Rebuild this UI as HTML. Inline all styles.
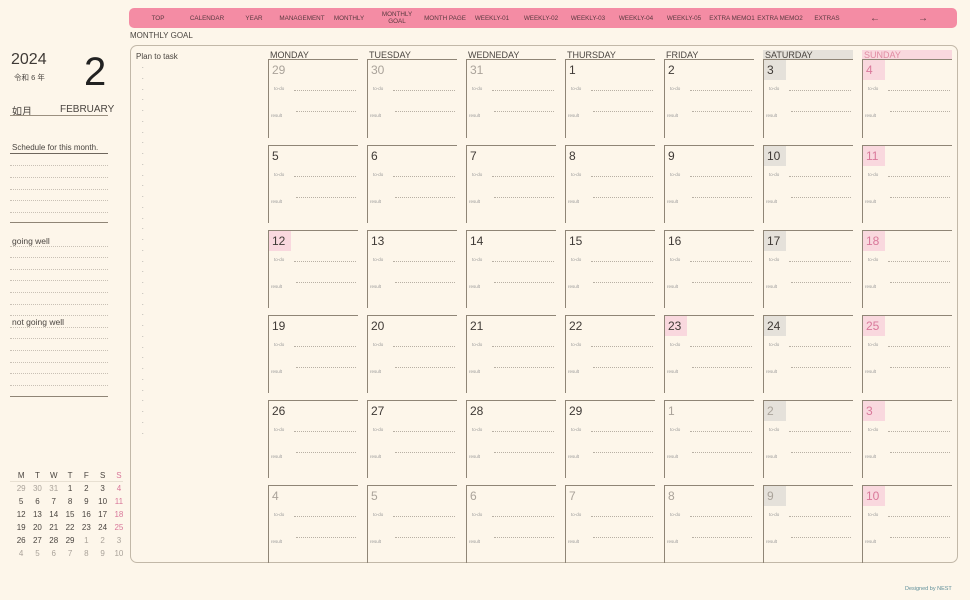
<!DOCTYPE html>
<html><head><meta charset="utf-8"><style>
*{margin:0;padding:0;box-sizing:border-box}
body{width:970px;height:600px;background:#fdf6ea;font-family:"Liberation Sans","Noto Sans CJK JP",sans-serif;color:#4a4540;position:relative;overflow:hidden}
.a{position:absolute;white-space:nowrap}
.nav{position:absolute;left:129px;top:8px;width:828px;height:20px;background:#f48ca4;border-radius:5px}
.ni{position:absolute;top:0;height:20px;font-size:6.3px;color:#5a3a40;transform:translateX(-50%);display:flex;align-items:center;text-align:center;line-height:7px}
.ar{font-size:10px}
.box{position:absolute;left:130px;top:45px;width:828px;height:518px;border:1.5px solid #c2b8a8;border-radius:7px}
.h{position:absolute;top:50px;width:90px;height:10px;font-size:9px;line-height:10px;border-bottom:1.5px solid #8f8576;padding-left:2px;color:#4a4540}
.c{position:absolute;width:90px;height:78px;border-top:1.5px solid #8f8576;border-left:1.5px solid #8f8576}
.n{position:absolute;left:3px;top:3px;font-size:12px;color:#3f3a36}
.g{color:#aaa39a}.p{color:#d9789a}
.bx{position:absolute;left:0;top:0;width:22px;height:20px}
.bs{background:#e5e1da}.bp{background:#f9d8de}
.t{position:absolute;left:5px;top:26px;font-size:4.5px;color:#999}
.t2{position:absolute;left:2px;top:53px;font-size:4.5px;color:#999}
.d1{position:absolute;left:25px;right:2px;top:30px;border-top:1px dotted #b8b0a4}
.d2{position:absolute;left:27px;right:2px;top:51px;border-top:1px dotted #b8b0a4}
.ln{position:absolute;left:10px;width:98px;border-top:1px dotted #c9c1b5}
.mc{font-size:8px;width:16.3px;text-align:center}
.row{display:flex}
</style></head><body>
<div class="nav">
<div class="ni" style="left:29px">TOP</div>
<div class="ni" style="left:78px">CALENDAR</div>
<div class="ni" style="left:125px">YEAR</div>
<div class="ni" style="left:173px">MANAGEMENT</div>
<div class="ni" style="left:220px">MONTHLY</div>
<div class="ni" style="left:268px">MONTHLY<br>GOAL</div>
<div class="ni" style="left:316px">MONTH PAGE</div>
<div class="ni" style="left:363px">WEEKLY-01</div>
<div class="ni" style="left:412px">WEEKLY-02</div>
<div class="ni" style="left:459px">WEEKLY-03</div>
<div class="ni" style="left:507px">WEEKLY-04</div>
<div class="ni" style="left:555px">WEEKLY-05</div>
<div class="ni" style="left:603px">EXTRA MEMO1</div>
<div class="ni" style="left:651px">EXTRA MEMO2</div>
<div class="ni" style="left:698px">EXTRAS</div>
<div class="ni ar" style="left:746px">←</div>
<div class="ni ar" style="left:794px">→</div>
</div>
<div class="a" style="left:130px;top:31px;font-size:8px">MONTHLY GOAL</div>

<div class="a" style="left:11px;top:51px;font-size:16px;color:#3f3a36">2024</div>
<div class="a" style="left:14px;top:72px;font-size:7.5px">令和 6 年</div>
<div class="a" style="left:84px;top:50px;font-size:40px;color:#222">2</div>
<div class="a" style="left:12px;top:103px;font-size:10px">如月</div>
<div class="a" style="left:60px;top:104px;font-size:10px">FEBRUARY</div>
<div class="a" style="left:10px;top:115px;width:98px;border-top:1.5px solid #9b9080"></div>
<div class="a" style="left:12px;top:143px;font-size:8px">Schedule for this month.</div>
<div class="a" style="left:10px;top:153px;width:98px;border-top:1px solid #6e665c"></div>
<div class="ln" style="top:165px"></div><div class="ln" style="top:177px"></div><div class="ln" style="top:189px"></div><div class="ln" style="top:200px"></div><div class="ln" style="top:212px"></div>
<div class="a" style="left:10px;top:222px;width:98px;border-top:1.5px solid #8f8576"></div>
<div class="a" style="left:12px;top:236px;font-size:8.5px">going well</div>
<div class="ln" style="top:246px"></div><div class="ln" style="top:257px"></div><div class="ln" style="top:269px"></div><div class="ln" style="top:280px"></div><div class="ln" style="top:292px"></div><div class="ln" style="top:304px"></div><div class="ln" style="top:315px"></div>
<div class="a" style="left:12px;top:317px;font-size:8.5px">not going well</div>
<div class="ln" style="top:327px"></div><div class="ln" style="top:338px"></div><div class="ln" style="top:350px"></div><div class="ln" style="top:362px"></div><div class="ln" style="top:373px"></div><div class="ln" style="top:385px"></div>
<div class="a" style="left:10px;top:396px;width:98px;border-top:1.5px solid #8f8576"></div>

<div class="a" style="left:10px;top:481px;width:113px;border-top:1px solid #e8e0d2"></div>
<div class="a" style="left:13px;top:469px;line-height:13px;width:115px">
<div class="row"><span class="mc">M</span><span class="mc">T</span><span class="mc">W</span><span class="mc">T</span><span class="mc">F</span><span class="mc">S</span><span class="mc p">S</span></div>
<div class="row"><span class="mc g">29</span><span class="mc g">30</span><span class="mc g">31</span><span class="mc">1</span><span class="mc">2</span><span class="mc">3</span><span class="mc p">4</span></div>
<div class="row"><span class="mc">5</span><span class="mc">6</span><span class="mc">7</span><span class="mc">8</span><span class="mc">9</span><span class="mc">10</span><span class="mc p">11</span></div>
<div class="row"><span class="mc">12</span><span class="mc">13</span><span class="mc">14</span><span class="mc">15</span><span class="mc">16</span><span class="mc">17</span><span class="mc p">18</span></div>
<div class="row"><span class="mc">19</span><span class="mc">20</span><span class="mc">21</span><span class="mc">22</span><span class="mc">23</span><span class="mc">24</span><span class="mc p">25</span></div>
<div class="row"><span class="mc">26</span><span class="mc">27</span><span class="mc">28</span><span class="mc">29</span><span class="mc g">1</span><span class="mc g">2</span><span class="mc g">3</span></div>
<div class="row"><span class="mc g">4</span><span class="mc g">5</span><span class="mc g">6</span><span class="mc g">7</span><span class="mc g">8</span><span class="mc g">9</span><span class="mc g">10</span></div>
</div>

<div class="box"></div>
<div class="a" style="left:136px;top:52px;font-size:8px">Plan to task</div>
<div class="a" style="left:142px;top:62px;font-size:6px;line-height:10.75px;color:#777;white-space:pre">.
.
.
.
.
.
.
.
.
.
.
.
.
.
.
.
.
.
.
.
.
.
.
.
.
.
.
.
.
.
.
.
.
.
.</div>

<div class="h" style="left:268px">MONDAY</div>
<div class="h" style="left:367px">TUESDAY</div>
<div class="h" style="left:466px">WEDNEDAY</div>
<div class="h" style="left:565px">THURSDAY</div>
<div class="h" style="left:664px">FRIDAY</div>
<div class="h" style="left:763px;background:#e5e1da">SATURDAY</div>
<div class="h" style="left:862px;background:#f9d8de;color:#e08aa2">SUNDAY</div>

<div class="c" style="left:268px;top:60px;border-top:0"><span class="n g">29</span><span class="t">to-do</span><i class="d1"></i><span class="t2">result</span><i class="d2"></i></div>
<div class="c" style="left:367px;top:60px;border-top:0"><span class="n g">30</span><span class="t">to-do</span><i class="d1"></i><span class="t2">result</span><i class="d2"></i></div>
<div class="c" style="left:466px;top:60px;border-top:0"><span class="n g">31</span><span class="t">to-do</span><i class="d1"></i><span class="t2">result</span><i class="d2"></i></div>
<div class="c" style="left:565px;top:60px;border-top:0"><span class="n">1</span><span class="t">to-do</span><i class="d1"></i><span class="t2">result</span><i class="d2"></i></div>
<div class="c" style="left:664px;top:60px;border-top:0"><span class="n">2</span><span class="t">to-do</span><i class="d1"></i><span class="t2">result</span><i class="d2"></i></div>
<div class="c" style="left:763px;top:60px;border-top:0"><i class="bx bs"></i><span class="n">3</span><span class="t">to-do</span><i class="d1"></i><span class="t2">result</span><i class="d2"></i></div>
<div class="c" style="left:862px;top:60px;border-top:0"><i class="bx bp"></i><span class="n p">4</span><span class="t">to-do</span><i class="d1"></i><span class="t2">result</span><i class="d2"></i></div>

<div class="c" style="left:268px;top:145px"><span class="n">5</span><span class="t">to-do</span><i class="d1"></i><span class="t2">result</span><i class="d2"></i></div>
<div class="c" style="left:367px;top:145px"><span class="n">6</span><span class="t">to-do</span><i class="d1"></i><span class="t2">result</span><i class="d2"></i></div>
<div class="c" style="left:466px;top:145px"><span class="n">7</span><span class="t">to-do</span><i class="d1"></i><span class="t2">result</span><i class="d2"></i></div>
<div class="c" style="left:565px;top:145px"><span class="n">8</span><span class="t">to-do</span><i class="d1"></i><span class="t2">result</span><i class="d2"></i></div>
<div class="c" style="left:664px;top:145px"><span class="n">9</span><span class="t">to-do</span><i class="d1"></i><span class="t2">result</span><i class="d2"></i></div>
<div class="c" style="left:763px;top:145px"><i class="bx bs"></i><span class="n">10</span><span class="t">to-do</span><i class="d1"></i><span class="t2">result</span><i class="d2"></i></div>
<div class="c" style="left:862px;top:145px"><i class="bx bp"></i><span class="n p">11</span><span class="t">to-do</span><i class="d1"></i><span class="t2">result</span><i class="d2"></i></div>

<div class="c" style="left:268px;top:230px"><i class="bx bp"></i><span class="n">12</span><span class="t">to-do</span><i class="d1"></i><span class="t2">result</span><i class="d2"></i></div>
<div class="c" style="left:367px;top:230px"><span class="n">13</span><span class="t">to-do</span><i class="d1"></i><span class="t2">result</span><i class="d2"></i></div>
<div class="c" style="left:466px;top:230px"><span class="n">14</span><span class="t">to-do</span><i class="d1"></i><span class="t2">result</span><i class="d2"></i></div>
<div class="c" style="left:565px;top:230px"><span class="n">15</span><span class="t">to-do</span><i class="d1"></i><span class="t2">result</span><i class="d2"></i></div>
<div class="c" style="left:664px;top:230px"><span class="n">16</span><span class="t">to-do</span><i class="d1"></i><span class="t2">result</span><i class="d2"></i></div>
<div class="c" style="left:763px;top:230px"><i class="bx bs"></i><span class="n">17</span><span class="t">to-do</span><i class="d1"></i><span class="t2">result</span><i class="d2"></i></div>
<div class="c" style="left:862px;top:230px"><i class="bx bp"></i><span class="n p">18</span><span class="t">to-do</span><i class="d1"></i><span class="t2">result</span><i class="d2"></i></div>

<div class="c" style="left:268px;top:315px"><span class="n">19</span><span class="t">to-do</span><i class="d1"></i><span class="t2">result</span><i class="d2"></i></div>
<div class="c" style="left:367px;top:315px"><span class="n">20</span><span class="t">to-do</span><i class="d1"></i><span class="t2">result</span><i class="d2"></i></div>
<div class="c" style="left:466px;top:315px"><span class="n">21</span><span class="t">to-do</span><i class="d1"></i><span class="t2">result</span><i class="d2"></i></div>
<div class="c" style="left:565px;top:315px"><span class="n">22</span><span class="t">to-do</span><i class="d1"></i><span class="t2">result</span><i class="d2"></i></div>
<div class="c" style="left:664px;top:315px"><i class="bx bp"></i><span class="n">23</span><span class="t">to-do</span><i class="d1"></i><span class="t2">result</span><i class="d2"></i></div>
<div class="c" style="left:763px;top:315px"><i class="bx bs"></i><span class="n">24</span><span class="t">to-do</span><i class="d1"></i><span class="t2">result</span><i class="d2"></i></div>
<div class="c" style="left:862px;top:315px"><i class="bx bp"></i><span class="n p">25</span><span class="t">to-do</span><i class="d1"></i><span class="t2">result</span><i class="d2"></i></div>

<div class="c" style="left:268px;top:400px"><span class="n">26</span><span class="t">to-do</span><i class="d1"></i><span class="t2">result</span><i class="d2"></i></div>
<div class="c" style="left:367px;top:400px"><span class="n">27</span><span class="t">to-do</span><i class="d1"></i><span class="t2">result</span><i class="d2"></i></div>
<div class="c" style="left:466px;top:400px"><span class="n">28</span><span class="t">to-do</span><i class="d1"></i><span class="t2">result</span><i class="d2"></i></div>
<div class="c" style="left:565px;top:400px"><span class="n">29</span><span class="t">to-do</span><i class="d1"></i><span class="t2">result</span><i class="d2"></i></div>
<div class="c" style="left:664px;top:400px"><span class="n g">1</span><span class="t">to-do</span><i class="d1"></i><span class="t2">result</span><i class="d2"></i></div>
<div class="c" style="left:763px;top:400px"><i class="bx bs"></i><span class="n g">2</span><span class="t">to-do</span><i class="d1"></i><span class="t2">result</span><i class="d2"></i></div>
<div class="c" style="left:862px;top:400px"><i class="bx bp"></i><span class="n p">3</span><span class="t">to-do</span><i class="d1"></i><span class="t2">result</span><i class="d2"></i></div>

<div class="c" style="left:268px;top:485px"><span class="n g">4</span><span class="t">to-do</span><i class="d1"></i><span class="t2">result</span><i class="d2"></i></div>
<div class="c" style="left:367px;top:485px"><span class="n g">5</span><span class="t">to-do</span><i class="d1"></i><span class="t2">result</span><i class="d2"></i></div>
<div class="c" style="left:466px;top:485px"><span class="n g">6</span><span class="t">to-do</span><i class="d1"></i><span class="t2">result</span><i class="d2"></i></div>
<div class="c" style="left:565px;top:485px"><span class="n g">7</span><span class="t">to-do</span><i class="d1"></i><span class="t2">result</span><i class="d2"></i></div>
<div class="c" style="left:664px;top:485px"><span class="n g">8</span><span class="t">to-do</span><i class="d1"></i><span class="t2">result</span><i class="d2"></i></div>
<div class="c" style="left:763px;top:485px"><i class="bx bs"></i><span class="n g">9</span><span class="t">to-do</span><i class="d1"></i><span class="t2">result</span><i class="d2"></i></div>
<div class="c" style="left:862px;top:485px"><i class="bx bp"></i><span class="n p">10</span><span class="t">to-do</span><i class="d1"></i><span class="t2">result</span><i class="d2"></i></div>

<div class="a" style="left:905px;top:586px;font-size:5.5px;color:#5f8f9a">Designed by NEST</div>
</body></html>
